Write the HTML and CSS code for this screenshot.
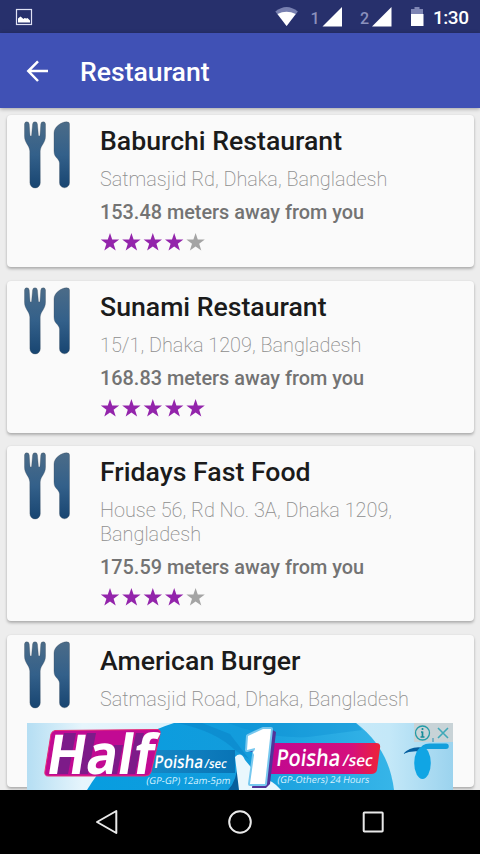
FILE: index.html
```
<!DOCTYPE html>
<html lang="en">
<head>
<meta charset="utf-8">
<title>Restaurant</title>
<link rel="stylesheet" href="styles.css">
</head>
<body>
<svg class="defs" width="0" height="0" aria-hidden="true">
  <defs>
    <linearGradient id="steel" x1="0" y1="0" x2="0" y2="68" gradientUnits="userSpaceOnUse"><stop offset="0" stop-color="#4c6c88"/><stop offset=".5" stop-color="#33608a"/><stop offset="1" stop-color="#174470"/></linearGradient>
    <g id="cutlery" fill="url(#steel)" stroke="#39495a" stroke-opacity=".45" stroke-width=".7">
      <path d="M.5 3Q.6.8 2.800.8T5.200 3L6 14.200q.7 1.800 1.600 0L8.600 3Q8.800.8 11 .8T13.400 3l1 11.200q.9 1.800 1.600 0L16.800 3Q17 .8 19.200.8T21.500 3V15c0 7-4.800 9-5.300 15L16.300 61.800a5.200 5.200 0 0 1-10.400 0L5.800 30C5.300 24 .5 22 .5 15z"/>
      <path d="M45.500 3.200V61.800a5 5 0 0 1-10 0V42c-.5-5-5.500-5-5.500-12V12C30 6 37 1 42.500.8q3 0 3 2.400z"/>
    </g>
    <path id="star" d="M10 0l2.200 6.500 7 .1-5.600 4.200 2.100 6.700-5.700-4-5.700 4 2.100-6.700L.8 6.600l7-.1z"/>
  </defs>
</svg>
<div class="screen">
  <header class="status">
    <svg width="480" height="33" viewBox="0 0 480 33">
      <rect x="16.500" y="9.500" width="15" height="15" fill="none" stroke="#dfe1f4" stroke-width="1.200"/>
      <path d="M18 22.500v-4l2.500-2 3 2.500 1-1 2 .5 1-.5 2.500 2.500v2z" fill="#fff"/>
      <path d="M275.300 11.500q11.200-9 22.600 0L286.600 26z" fill="#7880b0"/>
      <path d="M277.500 14q9-4.500 18.200 0l-9.100 12z" fill="#fff"/>
      <path d="M322.500 26.500H342V7zM372 26.500H391.500V7z" fill="#fff"/>
      <path d="M411 16V9h3.500V7h5v2h3.500v7z" fill="#7f86b4"/>
      <path d="M411 14h12.500v12H411z" fill="#fff"/>
      <text class="sim" x="310.500" y="24">1</text>
      <text class="sim" x="360" y="24">2</text>
      <text class="clock" x="433" y="24.300" textLength="36">1:30</text>
    </svg>
  </header>
  <div class="toolbar">
    <svg class="back" width="24" height="24" viewBox="0 0 24 24" fill="none" stroke="#fff" stroke-width="2.500"><path d="M13 2.300L3.300 12l9.700 10M3.300 12H23"/></svg>
    <h1>Restaurant</h1>
  </div>
  <main class="list">
    <article class="card">
      <svg class="icon" viewBox="0 0 46 68"><use href="#cutlery"/></svg>
      <div class="info">
        <h2>Baburchi Restaurant</h2>
        <p class="address">Satmasjid Rd, Dhaka, Bangladesh</p>
        <p class="distance">153.48 meters away from you</p>
        <svg class="stars" width="106" height="18"><use href="#star"/><use href="#star" x="21.400"/><use href="#star" x="42.800"/><use href="#star" x="64.200"/><use class="off" href="#star" x="85.600"/></svg>
      </div>
    </article>
    <article class="card">
      <svg class="icon" viewBox="0 0 46 68"><use href="#cutlery"/></svg>
      <div class="info">
        <h2>Sunami Restaurant</h2>
        <p class="address">15/1, Dhaka 1209, Bangladesh</p>
        <p class="distance">168.83 meters away from you</p>
        <svg class="stars" width="106" height="18"><use href="#star"/><use href="#star" x="21.400"/><use href="#star" x="42.800"/><use href="#star" x="64.200"/><use href="#star" x="85.600"/></svg>
      </div>
    </article>
    <article class="card">
      <svg class="icon" viewBox="0 0 46 68"><use href="#cutlery"/></svg>
      <div class="info">
        <h2>Fridays Fast Food</h2>
        <p class="address">House 56, Rd No. 3A, Dhaka 1209,<br>Bangladesh</p>
        <p class="distance">175.59 meters away from you</p>
        <svg class="stars" width="106" height="18"><use href="#star"/><use href="#star" x="21.400"/><use href="#star" x="42.800"/><use href="#star" x="64.200"/><use class="off" href="#star" x="85.600"/></svg>
      </div>
    </article>
    <article class="card">
      <svg class="icon" viewBox="0 0 46 68"><use href="#cutlery"/></svg>
      <div class="info">
        <h2>American Burger</h2>
        <p class="address">Satmasjid Road, Dhaka, Bangladesh</p>
      </div>
    </article>
  </main>
  <svg class="ad" width="426" height="67" viewBox="0 0 426 67">
    <defs>
      <linearGradient id="pale"><stop offset="0" stop-color="#b5def3"/><stop offset=".13" stop-color="#e6f5fc"/><stop offset=".85" stop-color="#c4e8f8"/><stop offset="1" stop-color="#9bd3ee"/></linearGradient>
      <linearGradient id="sky"><stop offset="0" stop-color="#079de0"/><stop offset=".5" stop-color="#139cdc"/><stop offset="1" stop-color="#37b5e8"/></linearGradient>
      <linearGradient id="pink"><stop offset="0" stop-color="#c00791"/><stop offset=".75" stop-color="#d50f7c"/><stop offset="1" stop-color="#ed2338"/></linearGradient>
      <linearGradient id="label"><stop offset="0" stop-color="#1687c5"/><stop offset="1" stop-color="#0874b6"/></linearGradient>
    </defs>
    <rect width="426" height="67" fill="url(#pale)"/>
    <path d="M60 67Q89 18 147 0H329Q362 25 367 67z" fill="url(#sky)"/>
    <path d="M150 0Q189 8 209 28L222 36 203 11 175 0z" fill="#087fc4" opacity=".45"/>
    <path d="M201 0Q241 16 281 14L335 7 329 0z" fill="#0787cc" opacity=".3"/>
    <path d="M201 67q10-10 10-32h6v32z" fill="#075e9c"/>
    <path d="M208 34q6-6 10 3l14 17q14 3 22 13H212z" fill="#e9f7fd"/>
    <path d="M125 27h83v23h-83z" fill="url(#label)"/>
    <path d="M28 7.500L131 6.500Q134 7 133 11L124 49Q123 53 118 53H21Q17 53 18 48L24 11Q25 8 28 7.500z" fill="#c20a93" stroke="#e62d78"/>
    <path d="M37 10h12l-8 41H29zM60 10h9l-8 41H51zM87 22h9l-6 29h-9zM109 10h8l-9 41h-8z" fill="#662185" opacity=".75"/>
    <text class="half" transform="translate(17.500 51) skewX(-9)" textLength="107" lengthAdjust="spacingAndGlyphs">Half</text>
    <path d="M243 20H349Q354 20 353 25L350 47Q349 51 344 51H239z" fill="url(#pink)"/>
    <path d="M221 11L234 6H244L249 9 243 61 239 65H225L229 29 218 28z" fill="#52339a"/>
    <path d="M221 13L236 6H244L238 61H223L228 25L220 27z" fill="#fff" stroke="#76c8ef" stroke-width="4" paint-order="stroke" stroke-linejoin="round"/>
    <text class="one" transform="translate(220 61) skewX(-6)" textLength="24" lengthAdjust="spacingAndGlyphs">1</text>
    <text class="rate" transform="translate(126.500 44.500) skewX(-7)" font-size="17.500" textLength="49" lengthAdjust="spacingAndGlyphs">Poisha</text>
    <text class="rate" transform="translate(177 45) skewX(-9)" font-size="12.500" textLength="22" lengthAdjust="spacingAndGlyphs">/sec</text>
    <text class="rate" transform="translate(248.500 43) skewX(-7)" font-size="23" textLength="64" lengthAdjust="spacingAndGlyphs">Poisha</text>
    <text class="rate" transform="translate(315 43) skewX(-9)" font-size="16" textLength="30" lengthAdjust="spacingAndGlyphs">/sec</text>
    <text class="terms" transform="translate(119 60.500) skewX(-9)" textLength="84" lengthAdjust="spacingAndGlyphs">(GP-GP) 12am-5pm</text>
    <text class="terms" transform="translate(250 60) skewX(-9)" textLength="92" lengthAdjust="spacingAndGlyphs">(GP-Others) 24 Hours</text>
    <path d="M387 0h39v19h-39z" fill="#c8d3d7"/>
    <path d="M376 31Q384 22 398 25L401 30Q386 26 376 31z" fill="#065fa0"/>
    <path d="M393 27Q394 20 404 20.500L419 20.500A2.700 2.700 0 0 1 419 26H399z" fill="#129fdc"/>
    <ellipse cx="395.500" cy="40" rx="8.300" ry="16" fill="#10a5e4"/>
    <circle cx="395.500" cy="10" r="7" fill="none" stroke="#239ca8" stroke-width="1.300"/>
    <path d="M395.500 8.500v5.500M395.500 5v2M393.500 14h4M394 9h1.500" stroke="#168c99" stroke-width="1.700"/>
    <path d="M411 5l10 10M421 5L411 15" stroke="#40a9b9" stroke-width="1.600"/>
    <path d="M406 15v4" stroke="#298fb3"/>
  </svg>
  <nav class="nav">
    <svg width="480" height="64" viewBox="0 0 480 64" fill="none" stroke="#e9e9e9" stroke-width="2">
      <path d="M97 32L116.300 21v22z" stroke-linejoin="round"/><circle cx="240" cy="32" r="10.800"/><rect x="363.700" y="22.500" width="19" height="19" rx=".7"/>
    </svg>
  </nav>
</div>
</body>
</html>
```
FILE: styles.css
```
* { box-sizing: border-box; }
body, h1, h2, p { margin: 0; }
body { font-family: Roboto, sans-serif; background: #000; }
svg { display: block; }
.defs { position: absolute; }
.screen { position: relative; display: flex; flex-direction: column; width: 480px; height: 854px; overflow: hidden; background: #ededed; }
.status { height: 33px; background: #27306c; }
.sim { font-size: 16px; font-weight: 500; fill: #8b91bd; }
.clock { font-size: 19px; font-weight: 500; fill: #fff; }
.toolbar { position: relative; display: flex; align-items: center; flex: none; height: 75px; padding-left: 25px; gap: 31px; background: #4051b5; color: #fff; box-shadow: 0 1px 4px rgba(0,0,0,.32); }
.toolbar h1 { font-size: 26.600px; font-weight: 500; line-height: 36px; padding-top: 3px; }
.list { display: flex; flex-direction: column; gap: 13.500px; height: 682px; padding: 7px 6.500px 0 7px; overflow: hidden; }
.card { display: flex; flex: none; min-height: 152px; padding: 6px 10px 0 17px; border-radius: 4px; background: #fafafa; box-shadow: 0 2px 3px rgba(0,0,0,.26), 0 0 2px rgba(0,0,0,.08); }
.icon { flex: none; width: 46px; height: 68px; margin-right: 30px; }
.info { padding-bottom: 15.200px; }
.card h2 { height: 40px; font-size: 26.650px; font-weight: 500; line-height: 40px; color: #1b1b1b; }
.address { margin-top: 7px; font-size: 19.850px; font-weight: 200; line-height: 23.500px; color: #8e8e8e; white-space: nowrap; }
.distance { margin-top: 8.600px; font-size: 19.880px; font-weight: 500; line-height: 26px; color: #737373; white-space: nowrap; }
.stars { margin-top: 7.400px; fill: #9324ab; }
.stars .off { fill: #a4a4a4; }
.ad { position: absolute; left: 27px; top: 723px; overflow: visible; }
.half { font: bold 55px "Open Sans", sans-serif; fill: #fff; }
.one { font: bold 60px "Open Sans", sans-serif; fill: #fff; }
.rate { font-family: "Open Sans", sans-serif; font-weight: 600; fill: #fff; }
.terms { font: 9.500px "Open Sans", sans-serif; fill: #d7f2ff; }
.nav { position: relative; height: 64px; background: #000; }
```
